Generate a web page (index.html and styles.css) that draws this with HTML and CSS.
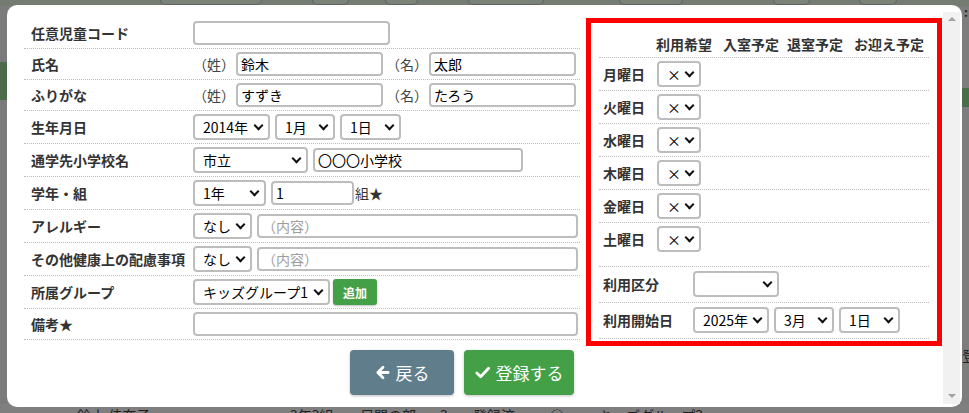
FILE: index.html
```html
<!DOCTYPE html>
<html lang="ja">

<head>
  <meta charset="utf-8">
  <title>児童登録</title>
  <link rel="stylesheet" href="styles.css">
</head>

<body>
  <div class="page">
    <div class="page-top">
      <span class="ghost g1"></span>
      <span class="ghost g2"></span>
      <span class="ghost g3"></span>
      <span class="ghost g4"></span>
      <span class="ghost g5"></span>
      <span class="ghost g6"></span>
      <span class="ghost g7"></span>
    </div>
    <div class="page-main">
      <div class="page-edge edge-left">
        <div class="edge-green left-green"></div>
      </div>
      <div class="page-center"></div>
      <div class="page-edge edge-right">
        <span class="edge-dots">:</span>
        <div class="edge-green right-green"></div>
        <span class="edge-glyph">登</span>
      </div>
    </div>
    <div class="page-list">
      <span class="c1">鈴木 佳奈子</span>
      <span class="c2">2年3組</span>
      <span class="c3">昼間の部</span>
      <span class="c4">3</span>
      <span class="c5">登録済</span>
      <span class="c6">○</span>
      <span class="c7">キッズグループ3</span>
      <span class="c8">ー</span>
    </div>
  </div>

  <div class="modal">
    <div class="modal-body">
      <div class="modal-cols">
        <div class="form-left">
          <div class="frow">
            <label class="flabel">任意児童コード</label>
            <div class="ffield"><input class="txt" style="width:197px"></div>
          </div>
          <div class="frow">
            <label class="flabel">氏名</label>
            <div class="ffield">
              <span class="note">（姓）</span><input class="txt" style="width:147px" value="鈴木">
              <span class="note note-gap">（名）</span><input class="txt" style="width:147px" value="太郎">
            </div>
          </div>
          <div class="frow">
            <label class="flabel">ふりがな</label>
            <div class="ffield">
              <span class="note">（姓）</span><input class="txt" style="width:147px" value="すずき">
              <span class="note note-gap">（名）</span><input class="txt" style="width:147px" value="たろう">
            </div>
          </div>
          <div class="frow">
            <label class="flabel">生年月日</label>
            <div class="ffield gap5">
              <span class="sel"><select style="width:77px"><option>2014年</option></select></span>
              <span class="sel"><select style="width:60px"><option>1月</option></select></span>
              <span class="sel"><select style="width:61px"><option>1日</option></select></span>
            </div>
          </div>
          <div class="frow">
            <label class="flabel">通学先小学校名</label>
            <div class="ffield gap5">
              <span class="sel"><select style="width:115px"><option>市立</option></select></span>
              <input class="txt" style="width:210px" value="〇〇〇小学校">
            </div>
          </div>
          <div class="frow">
            <label class="flabel">学年・組</label>
            <div class="ffield gap5">
              <span class="sel"><select style="width:73px"><option>1年</option></select></span>
              <input class="txt" style="width:83px" value="1">
              <span class="unit">組★</span>
            </div>
          </div>
          <div class="frow">
            <label class="flabel">アレルギー</label>
            <div class="ffield gap5">
              <span class="sel"><select style="width:59px"><option>なし</option></select></span>
              <input class="txt" style="width:321px" placeholder="（内容）">
            </div>
          </div>
          <div class="frow">
            <label class="flabel">その他健康上の配慮事項</label>
            <div class="ffield gap5">
              <span class="sel"><select style="width:59px"><option>なし</option></select></span>
              <input class="txt" style="width:321px" placeholder="（内容）">
            </div>
          </div>
          <div class="frow">
            <label class="flabel">所属グループ</label>
            <div class="ffield gap3">
              <span class="sel"><select style="width:137px"><option>キッズグループ1</option></select></span>
              <button class="btn-add">追加</button>
            </div>
          </div>
          <div class="frow">
            <label class="flabel">備考★</label>
            <div class="ffield"><input class="txt" style="width:385px"></div>
          </div>

          <div class="actions">
            <button class="btn btn-back">
              <svg class="ico" viewBox="0 0 16 16"><path d="M8.5 2.5 3 8l5.5 5.5M3.5 8H14" /></svg>
              戻る
            </button>
            <button class="btn btn-save">
              <svg class="ico" viewBox="0 0 16 16"><path d="M2 8.5l4 4 8.5-9" /></svg>
              登録する
            </button>
          </div>
        </div>

        <div class="week-box">
          <div class="wrow whead">
            <span></span>
            <span>利用希望</span>
            <span>入室予定</span>
            <span>退室予定</span>
            <span>お迎え予定</span>
          </div>
          <div class="wrow"><span class="wlabel">月曜日</span><span class="sel"><select class="day-sel"><option>×</option></select></span></div>
          <div class="wrow"><span class="wlabel">火曜日</span><span class="sel"><select class="day-sel"><option>×</option></select></span></div>
          <div class="wrow"><span class="wlabel">水曜日</span><span class="sel"><select class="day-sel"><option>×</option></select></span></div>
          <div class="wrow"><span class="wlabel">木曜日</span><span class="sel"><select class="day-sel"><option>×</option></select></span></div>
          <div class="wrow"><span class="wlabel">金曜日</span><span class="sel"><select class="day-sel"><option>×</option></select></span></div>
          <div class="wrow wlast"><span class="wlabel">土曜日</span><span class="sel"><select class="day-sel"><option>×</option></select></span></div>

          <div class="arow">
            <span class="wlabel">利用区分</span>
            <div class="afield"><span class="sel"><select style="width:86px"><option></option></select></span></div>
          </div>
          <div class="arow">
            <span class="wlabel">利用開始日</span>
            <div class="afield">
              <span class="sel"><select style="width:76px"><option>2025年</option></select></span>
              <span class="sel"><select style="width:60px"><option>3月</option></select></span>
              <span class="sel"><select style="width:61px"><option>1日</option></select></span>
            </div>
          </div>
        </div>
      </div>
    </div>
    <div class="scrollbar">
      <span class="sb-up"></span>
      <span class="sb-down"></span>
    </div>
  </div>
</body>

</html>
```

FILE: styles.css
```css
* {
  box-sizing: border-box;
}

body {
  margin: 0;
  width: 969px;
  height: 413px;
  overflow: hidden;
  font-family: "Noto Sans CJK JP", "Noto Sans", sans-serif;
  font-size: 14px;
  color: #333333;
  background: #7f7f7f;
}

/* page behind the dialog */
.page {
  height: 413px;
  display: flex;
  flex-direction: column;
}

.page-top {
  height: 6px;
  flex: none;
  background: #747c72;
  display: flex;
  align-items: flex-end;
  overflow: hidden;
}

.ghost {
  height: 20px;
  margin-bottom: 1px;
  border: 1px solid #5d645c;
  border-radius: 5px;
  background: #7b8379;
}

.g1 { margin-left: 160px; width: 102px; }
.g2 { margin-left: 50px; width: 37px; }
.g3 { margin-left: 36px; width: 33px; }
.g4 { margin-left: 50px; width: 76px; }
.g5 { margin-left: 75px; width: 64px; }
.g6 { margin-left: 90px; width: 37px; }
.g7 { margin-left: 49px; width: 38px; }

.page-main {
  height: 398px;
  flex: none;
  display: flex;
}

.page-edge {
  width: 7px;
  flex: none;
  display: flex;
  flex-direction: column;
}

.page-center {
  flex: 1;
}

.edge-left {
  background: #7b7b7b;
}

.left-green {
  margin-top: 56px;
  height: 38px;
  background: #4d6c4b;
}

.edge-right {
  background: #7d7d7d;
  align-items: flex-start;
}

.edge-dots {
  margin-left: 2px;
  height: 14px;
  line-height: 12px;
  font-size: 12px;
  font-weight: bold;
  color: #222;
}

.right-green {
  margin-top: 68px;
  width: 7px;
  height: 19px;
  background: #4b6d4a;
}

.edge-glyph {
  margin-top: 240px;
  font-size: 14px;
  line-height: 16px;
  color: #222;
  white-space: nowrap;
}

.page-list {
  flex: none;
  height: 20px;
  display: flex;
  font-size: 14px;
  line-height: 20px;
  color: #1f1f1f;
  white-space: nowrap;
  padding-top: 1px;
}

.page-list .c1 { margin-left: 77px; width: 213px; }
.page-list .c2 { width: 70px; }
.page-list .c3 { width: 80px; }
.page-list .c4 { width: 33px; }
.page-list .c5 { width: 77px; }
.page-list .c6 { width: 48px; }
.page-list .c7 { width: 160px; }

/* dialog */
.modal {
  position: absolute;
  left: 7px;
  top: 5px;
  width: 955px;
  height: 402px;
  background: #ffffff;
  border-radius: 10px;
  display: flex;
}

.modal-body {
  flex: 1;
  padding: 13px 0 0 17px;
}

.modal-cols {
  display: flex;
  align-items: flex-start;
}

.scrollbar {
  width: 17px;
  margin: 7px 2px 3px 0;
  background: #f1f1f1;
  display: flex;
  flex-direction: column;
  justify-content: space-between;
  align-items: center;
  padding: 5px 0 6px;
}

.sb-up,
.sb-down {
  width: 0;
  height: 0;
  border-left: 4px solid transparent;
  border-right: 4px solid transparent;
}

.sb-up {
  border-bottom: 4px solid #a3a3a3;
}

.sb-down {
  border-top: 4px solid #a3a3a3;
}

/* left form */
.form-left {
  width: 556px;
}

.frow {
  display: flex;
  align-items: center;
  padding: 3px 0;
  border-bottom: 1px dotted #bdbdbd;
}

.flabel {
  width: 169px;
  flex: none;
  padding-left: 7px;
  font-weight: bold;
  line-height: 20px;
  color: #333;
  white-space: nowrap;
}

.ffield {
  display: flex;
  align-items: center;
}

.gap5 {
  gap: 5px;
}

.gap3 {
  gap: 3px;
}

.note {
  width: 42px;
  margin-right: 1px;
  color: #444;
  line-height: 20px;
}

.note-gap {
  margin-left: 3px;
}

.unit {
  margin-left: -4px;
  color: #333;
}

.txt {
  height: 24px;
  border: 2px solid #bdbdbd;
  border-radius: 4px;
  padding: 0 3px;
  font-family: inherit;
  font-size: 14px;
  color: #000;
  outline: none;
}

.txt::placeholder {
  color: #9e9e9e;
}

.sel {
  position: relative;
  display: inline-block;
  justify-self: start;
  height: 26px;
}

.sel select {
  -webkit-appearance: none;
  appearance: none;
  height: 26px;
  border: 2px solid #bdbdbd;
  border-radius: 4px;
  background: #fff;
  padding: 0 16px 0 8px;
  font-family: inherit;
  font-size: 14px;
  color: #000;
  outline: none;
}

.sel::after {
  content: "";
  position: absolute;
  right: 8px;
  top: 8px;
  width: 5px;
  height: 5px;
  border-right: 2.5px solid #111;
  border-bottom: 2.5px solid #111;
  transform: rotate(45deg);
  pointer-events: none;
}

.btn-add {
  height: 26px;
  width: 44px;
  border: 0;
  border-radius: 3px;
  background: #43a047;
  color: #fff;
  font-family: inherit;
  font-size: 12px;
  font-weight: bold;
  box-shadow: 0 1px 2px rgba(0, 0, 0, .25);
}

.actions {
  display: flex;
  justify-content: flex-end;
  gap: 10px;
  margin-top: 10px;
  padding-right: 6px;
}

.btn {
  height: 45px;
  border: 0;
  border-radius: 4px;
  color: #fff;
  font-family: inherit;
  font-size: 17px;
  display: flex;
  align-items: center;
  justify-content: center;
  gap: 6px;
  box-shadow: 0 1px 3px rgba(0, 0, 0, .25);
}

.btn-back {
  width: 104px;
  background: #607d8b;
}

.btn-save {
  width: 110px;
  background: #43a047;
}

.ico {
  width: 15px;
  height: 15px;
  fill: none;
  stroke: #fff;
  stroke-width: 3;
  stroke-linecap: round;
  stroke-linejoin: round;
}

/* right weekly box */
.week-box {
  width: 356px;
  margin-left: 6px;
  border: 5px solid #ff0000;
  padding: 0 8px 2px;
}

.wrow {
  display: grid;
  grid-template-columns: 57px 67px 64px 67px 1fr;
  align-items: center;
  padding: 3px 0;
  border-bottom: 1px dotted #bdbdbd;
}

.whead {
  height: 35px;
  padding: 11px 0 3px;
  align-items: start;
  font-weight: bold;
  line-height: 20px;
  color: #333;
  white-space: nowrap;
}

.wlast {
  padding-bottom: 14px;
}

.wlabel {
  padding-left: 4px;
  font-weight: bold;
  line-height: 20px;
  color: #333;
  white-space: nowrap;
}

.day-sel {
  width: 44px;
}

.wrow .sel {
  margin-left: 1px;
}

.arow {
  display: grid;
  grid-template-columns: 94px 1fr;
  align-items: center;
  padding: 4px 0 5px;
  border-bottom: 1px dotted #bdbdbd;
}

.afield {
  display: flex;
  gap: 5px;
}
```
